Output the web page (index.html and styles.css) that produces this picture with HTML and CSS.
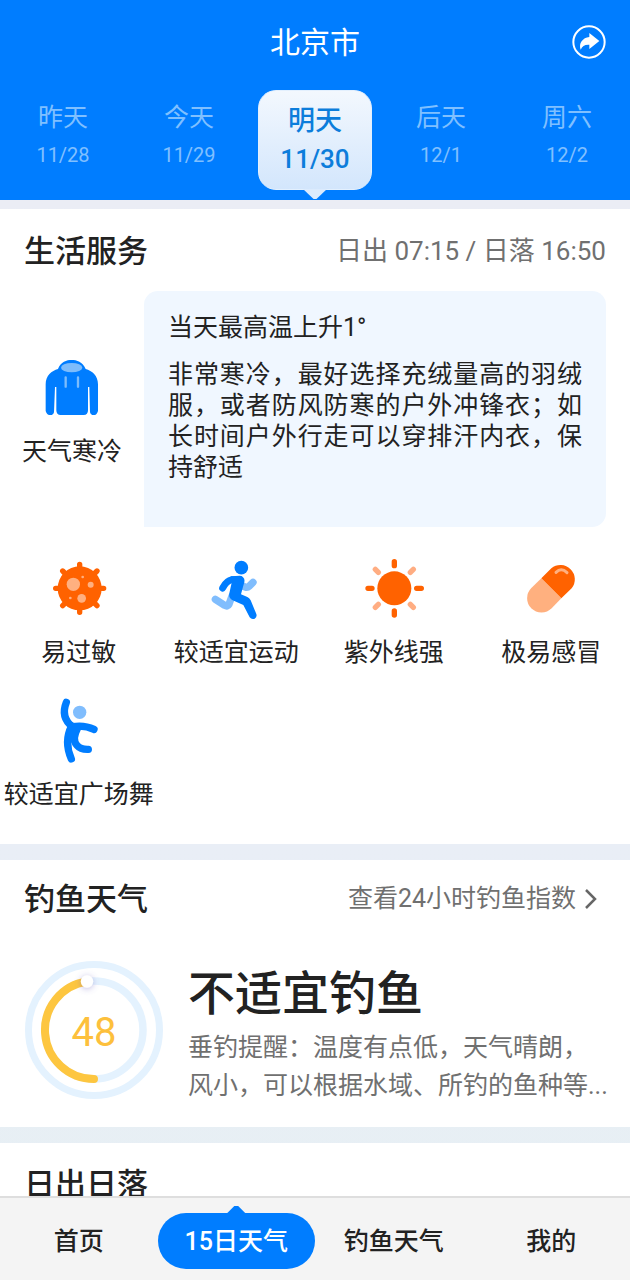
FILE: index.html
```html
<!DOCTYPE html>
<html lang="zh-CN">
<head>
<meta charset="utf-8">
<meta name="viewport" content="width=device-width, initial-scale=1">
<title>15日天气</title>
<link rel="stylesheet" href="styles.css">
</head>
<body>
<div class="app">
  <header class="header">
    <div class="titlebar">
      <h1 class="city">北京市</h1>
      <button class="share" type="button" aria-label="分享">
        <svg viewBox="0 0 102 102" aria-hidden="true">
          <circle cx="51" cy="51" r="47" fill="none" stroke="#fff" stroke-width="6"/>
          <path d="M52 24 L82 48 L52 72 V59 C38 58 31 63 26 74 C19 55 32 38 52 36Z" fill="#fff"/>
        </svg>
      </button>
    </div>
    <nav class="days" aria-label="日期">
      <button class="day" type="button"><span class="day-name">昨天</span><span class="day-date">11/28</span></button>
      <button class="day" type="button"><span class="day-name">今天</span><span class="day-date">11/29</span></button>
      <button class="day day-active" type="button"><span class="day-name">明天</span><span class="day-date">11/30</span></button>
      <button class="day" type="button"><span class="day-name">后天</span><span class="day-date">12/1</span></button>
      <button class="day" type="button"><span class="day-name">周六</span><span class="day-date">12/2</span></button>
    </nav>
  </header>

  <main class="content">
    <section class="panel life">
      <div class="panel-head">
        <h2 class="panel-title">生活服务</h2>
        <p class="sun-times">日出 07:15 / 日落 16:50</p>
      </div>
      <div class="clothing">
        <div class="clothing-item">
          <svg class="icon" viewBox="0 0 192 192" aria-hidden="true">
            <path d="M17 168 V82 C17 55 35 42 54 36 C62 14 80 9 95 9 C110 9 128 14 137 36 C156 42 174 55 174 82 V162 Q170 174 164 174 H157 Q152 174 150 166 L148 90 H144 V160 Q144 174 131 174 H62 Q49 174 49 160 V90 H45 L42 166 Q40 174 35 174 H28 Q21 174 17 162Z" fill="#007dff"/>
            <ellipse cx="95" cy="32" rx="32" ry="14" fill="#7dbcfb"/>
            <path d="M77 61 V89 M114 61 V89" stroke="#7dbcfb" stroke-width="7" stroke-linecap="round"/>
          </svg>
          <span class="label">天气寒冷</span>
        </div>
        <div class="advice">
          <p class="advice-title">当天最高温上升1°</p>
          <p class="advice-text">非常寒冷，最好选择充绒量高的羽绒服，或者防风防寒的户外冲锋衣；如长时间户外行走可以穿排汗内衣，保持舒适</p>
        </div>
      </div>
      <ul class="services">
        <li class="service">
          <svg class="icon" viewBox="0 0 192 192" aria-hidden="true">
            <g stroke="#ff6200" stroke-width="16" stroke-linecap="round">
              <path d="M98 25 V169 M26 97 H170 M47 45 L150 149 M150 45 L47 149"/>
            </g>
            <circle cx="98" cy="97" r="66" fill="#ff6200"/>
            <g fill="#ffb080">
              <circle cx="79" cy="85" r="20"/><circle cx="131" cy="86" r="9"/>
              <circle cx="104" cy="127" r="13"/><circle cx="107" cy="63" r="4"/><circle cx="70" cy="126" r="4"/>
            </g>
          </svg>
          <span class="label">易过敏</span>
        </li>
        <li class="service">
          <svg class="icon" viewBox="0 0 192 192" aria-hidden="true">
            <g fill="none" stroke="#80bdfd" stroke-width="22" stroke-linecap="round" stroke-linejoin="round">
              <path d="M34 130 L62 148 Q71 153 75 145 L84 120"/>
              <path d="M116 90 L126 94 Q131 95 135 91 L147 79"/>
            </g>
            <circle cx="112" cy="35" r="20.500" fill="#007dff"/>
            <path d="M56 96 Q67 74 84 71 L107 70" fill="none" stroke="#007dff" stroke-width="21" stroke-linecap="round"/>
            <path d="M80 61 H107 Q124 62 121 78 L111 115 L130 123 Q136 126 140 133 L157 174 Q160 183 152 188 Q143 192 137 184 L118 147 L86 133 Q73 127 76 112 L83 80Z" fill="#007dff"/>
          </svg>
          <span class="label">较适宜运动</span>
        </li>
        <li class="service">
          <svg class="icon" viewBox="0 0 192 192" aria-hidden="true">
            <circle cx="97" cy="97" r="51" fill="#ff6200"/>
            <g stroke-width="16" stroke-linecap="round">
              <path d="M97 17 V29 M97 165 V177 M18 97 H30 M164 97 H178" stroke="#ff6200"/>
              <path d="M40 40 L49 49 M154 40 L145 49 M40 154 L49 145 M154 154 L145 145" stroke="#ffad82"/>
            </g>
          </svg>
          <span class="label">紫外线强</span>
        </li>
        <li class="service">
          <svg class="icon" viewBox="0 0 192 192" aria-hidden="true">
            <path d="M67 67 L127 127 L98 157 A43 43 0 0 1 37 96Z" fill="#ffb07f"/>
            <path d="M67 67 L97 37 A43 43 0 0 1 158 97 L127 127Z" fill="#ff6200"/>
            <path d="M111 49 Q127 33 144 50" fill="none" stroke="#ffb07f" stroke-width="9" stroke-linecap="round"/>
          </svg>
          <span class="label">极易感冒</span>
        </li>
        <li class="service">
          <svg class="icon" viewBox="0 0 192 192" aria-hidden="true">
            <circle cx="98" cy="43" r="20" fill="#80bdfd"/>
            <g fill="none" stroke="#007dff" stroke-width="22" stroke-linecap="round" stroke-linejoin="round">
              <path d="M58 13 Q40 58 76 86 Q112 80 141 94"/>
              <path d="M74 84 Q50 130 73 183"/>
              <path d="M76 86 L91 92 Q74 124 90 142 Q101 155 124 154"/>
            </g>
            <path d="M64 84 L98 88 L82 112 L76 134 L60 132Z" fill="#007dff"/>
          </svg>
          <span class="label">较适宜广场舞</span>
        </li>
      </ul>
    </section>

    <section class="panel fishing">
      <div class="panel-head">
        <h2 class="panel-title">钓鱼天气</h2>
        <a class="more" href="#">查看24小时钓鱼指数
          <svg class="chevron" viewBox="0 0 14 22" aria-hidden="true"><path d="M2 2 L11 11 L2 20" fill="none" stroke="#666" stroke-width="2.500"/></svg>
        </a>
      </div>
      <div class="fishing-body">
        <div class="gauge">
          <svg class="gauge-ring" viewBox="0 0 138 138" aria-hidden="true">
            <defs>
              <filter id="knob-shadow" x="-100%" y="-100%" width="300%" height="300%">
                <feDropShadow dx="0" dy="1" stdDeviation="3" flood-color="#7060c0" flood-opacity=".45"/>
              </filter>
            </defs>
            <g fill="none" stroke="#e4f2fe">
              <circle cx="69" cy="69" r="65.500" stroke-width="7"/>
              <circle cx="69" cy="69" r="49" stroke-width="7.500"/>
            </g>
            <path d="M69 118 A49 49 0 0 1 62 20.500" fill="none" stroke="#fdc640" stroke-width="8" stroke-linecap="round"/>
            <circle cx="62" cy="20.500" r="6.200" fill="#fff" filter="url(#knob-shadow)"/>
          </svg>
          <span class="gauge-value">48</span>
        </div>
        <div class="fishing-text">
          <h3 class="verdict">不适宜钓鱼</h3>
          <p class="tip">垂钓提醒：温度有点低，天气晴朗，风小，可以根据水域、所钓的鱼种等...</p>
        </div>
      </div>
    </section>

    <section class="panel sunrise">
      <h2 class="panel-title">日出日落</h2>
    </section>
  </main>

  <nav class="tabbar" aria-label="主导航">
    <a class="tab" href="#">首页</a>
    <a class="tab tab-active" href="#" aria-current="page">15日天气</a>
    <a class="tab" href="#">钓鱼天气</a>
    <a class="tab" href="#">我的</a>
  </nav>
</div>
</body>
</html>
```
FILE: styles.css
```css
* {
  box-sizing: border-box;
  margin: 0;
  padding: 0;
}

body {
  font-family: Roboto, "Noto Sans CJK SC", sans-serif;
  font-size: 25px;
  color: #222;
  background: #fff;
}

button {
  font: inherit;
  color: inherit;
  background: none;
  border: 0;
}

a {
  color: inherit;
  text-decoration: none;
}

.app {
  display: flex;
  flex-direction: column;
  height: 100vh;
}

/* Header */
.header {
  flex: none;
  color: #fff;
  background: #007dff;
}

.titlebar {
  display: grid;
  grid-template-columns: 1fr auto 1fr;
  align-items: center;
  height: 84px;
  padding: 0 24px;
}

.city {
  grid-column: 2;
  padding-bottom: 4px;
  font-size: 30px;
  font-weight: 400;
}

.share {
  justify-self: end;
  width: 34px;
  height: 34px;
}

.share svg {
  display: block;
}

.days {
  display: grid;
  grid-template-columns: repeat(5, 1fr);
  justify-items: center;
  height: 116px;
  padding-top: 6px;
}

.day {
  display: flex;
  flex-direction: column;
  align-items: center;
  width: 114px;
  height: 100px;
  padding-top: 9px;
  color: #80c0ff;
}

.day-name {
  line-height: 38px;
}

.day-date {
  font-size: 20px;
  line-height: 36px;
}

.day-active {
  position: relative;
  padding-top: 11px;
  color: #0c7ddb;
  font-weight: 500;
  background: linear-gradient(#f3f8fe, #d3e6fc);
  border: 1px solid #e3f0fe;
  border-radius: 18px;
}

.day-active::after {
  content: "";
  position: absolute;
  top: 98px;
  left: 44px;
  width: 24px;
  height: 10px;
  background: #dcebfd;
  clip-path: polygon(0 0, 100% 0, 56% 100%, 44% 100%);
}

.day-active .day-name {
  font-size: 27px;
}

.day-active .day-date {
  font-size: 26px;
  line-height: 39px;
}

/* Panels */
.content {
  flex: 1;
  min-height: 0;
  display: flex;
  flex-direction: column;
  gap: 16px;
  padding-top: 9px;
  overflow-y: auto;
  scrollbar-width: none;
  background: linear-gradient(#ebedf5, #e9eef6 65%, #e7eff4);
}

.panel {
  flex: none;
  background: #fff;
}

.panel-head {
  display: flex;
  align-items: flex-start;
  justify-content: space-between;
  padding: 0 24px;
}

.panel-title {
  font-size: 31px;
  line-height: 44px;
  font-weight: 500;
}

.sun-times,
.more {
  line-height: 42px;
  color: #707070;
}

.sun-times {
  font-size: 26px;
}

/* Life services */
.life {
  padding: 21px 0 31px;
}

.clothing {
  display: flex;
  margin-top: 17px;
  padding-right: 24px;
}

.clothing-item {
  flex: none;
  display: flex;
  flex-direction: column;
  align-items: center;
  width: 144px;
  padding-top: 66px;
}

.icon {
  display: block;
  width: 64px;
  height: 64px;
  overflow: visible;
}

.label {
  white-space: nowrap;
  line-height: 36px;
}

.clothing-item .label {
  margin-top: 13px;
}

.advice {
  flex: 1;
  min-height: 236px;
  padding: 22px 24px 40px;
  background: #f0f7ff;
  border-radius: 14px 14px 14px 0;
}

.advice-title {
  font-size: 25px;
  font-weight: 400;
  line-height: 30px;
}

.advice-text {
  margin-top: 16px;
  line-height: 31px;
  text-align: justify;
}

.services {
  display: grid;
  grid-template-columns: repeat(4, 1fr);
  row-gap: 27px;
  margin-top: 29px;
  list-style: none;
}

.service {
  display: flex;
  flex-direction: column;
  align-items: center;
  gap: 15px;
}

/* Fishing */
.fishing {
  padding: 18px 0 22px;
}

.more {
  display: flex;
  align-items: center;
  gap: 8px;
  padding-right: 8px;
}

.chevron {
  width: 14px;
  height: 22px;
}

.fishing-body {
  display: flex;
  align-items: flex-start;
  gap: 25px;
  margin-top: 37px;
  padding: 0 20px 0 25px;
}

.gauge {
  flex: none;
  display: grid;
  place-items: center;
  width: 138px;
  height: 138px;
  margin-top: 2px;
}

.gauge-ring,
.gauge-value {
  grid-area: 1 / 1;
}

.gauge-ring {
  width: 138px;
  height: 138px;
}

.gauge-value {
  padding-top: 4px;
  font-size: 40px;
  color: #fdc03c;
}

.fishing-text {
  padding-top: 3px;
}

.verdict {
  font-size: 47px;
  line-height: 64px;
  font-weight: 500;
}

.tip {
  padding-top: 3px;
  line-height: 38px;
  color: #707070;
}

.sunrise {
  padding: 20px 24px 60px;
}

/* Bottom navigation */
.tabbar {
  position: relative;
  flex: none;
  display: grid;
  grid-template-columns: repeat(4, 1fr);
  align-items: center;
  height: 84px;
  padding-top: 4px;
  background: #f4f4f4;
  border-top: 2px solid #dedede;
}

.tab {
  padding-top: 2px;
  line-height: 54px;
  text-align: center;
  font-weight: 500;
}

.tab-active {
  position: relative;
  color: #fff;
  background: #007dff;
  border-radius: 28px;
}

.tab-active::before {
  content: "";
  position: absolute;
  top: -7px;
  left: calc(50% - 12px);
  width: 24px;
  height: 10px;
  background: #007dff;
  clip-path: polygon(42% 0, 58% 0, 100% 100%, 0 100%);
}
```
